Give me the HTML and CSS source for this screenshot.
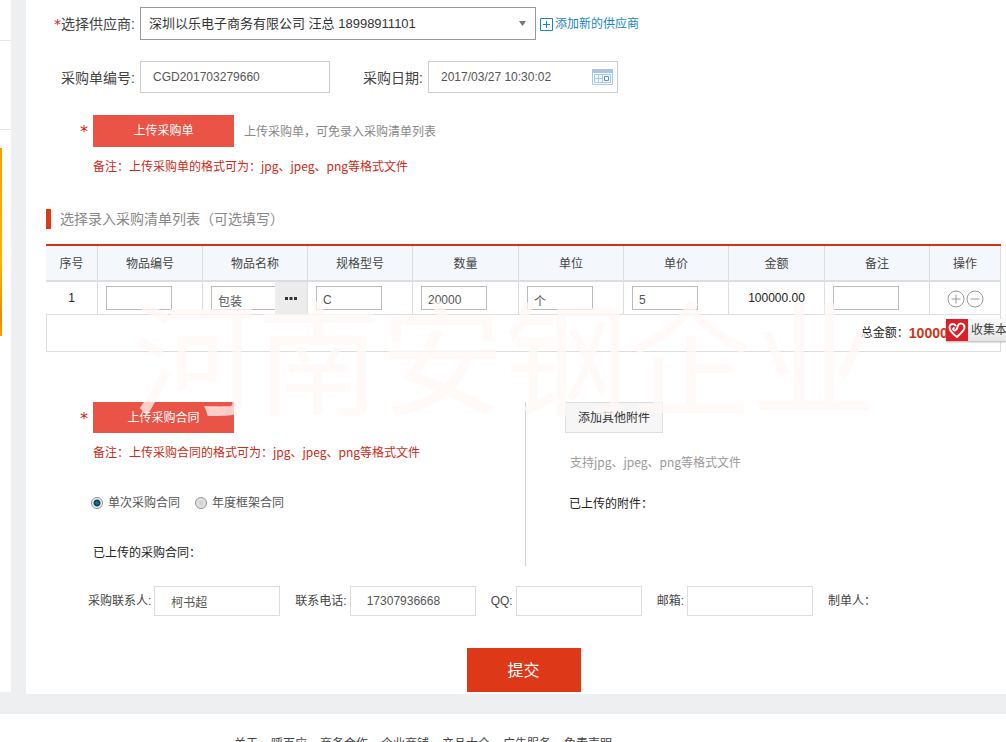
FILE: index.html
```html
<!DOCTYPE html>
<html lang="zh-CN">
<head>
<meta charset="utf-8">
<title>采购单</title>
<link rel="stylesheet" href="styles.css">
</head>
<body>
<div class="layout">
  <aside class="side">
    <div class="side-item side-first"></div>
    <div class="side-item side-second"></div>
    <div class="side-banner"></div>
  </aside>
  <main class="main">
    <form class="form">
      <div class="row row-supplier">
        <label class="label" for="supplier"><span class="req">*</span>选择供应商:</label>
        <div class="select-wrap">
          <select id="supplier" class="select"><option>深圳以乐电子商务有限公司 汪总 18998911101</option></select>
          <svg class="arrow" width="8" height="6" viewBox="0 0 8 6"><path d="M0 0h7L3.500 5z" fill="#777"/></svg>
        </div>
        <a class="add-link" href="#"><svg width="13" height="13" viewBox="0 0 13 13" fill="none" stroke="#1a86c2"><path d="M.5.5h12v12H.5zM3 6.500h7M6.500 3v7"/></svg>添加新的供应商</a>
      </div>

      <div class="row row-order">
        <label class="label" for="orderno">采购单编号:</label>
        <input id="orderno" class="field" value="CGD201703279660">
        <label class="label label-date" for="date">采购日期:</label>
        <div class="date-wrap">
          <input id="date" class="field" value="2017/03/27 10:30:02">
          <svg class="calendar" width="21" height="16" viewBox="0 0 21 16" fill="none"><path d="M.5.5h20v15H.5z" fill="#f5faff" stroke="#a9cbe8"/><path d="M0 0h21v4H0z" fill="#a9c6e4"/><path d="M2.500 5.500h16v8h-16zM2.500 9.500h9M6.500 5.500v8M10.500 5.500v8" stroke="#a9cbe8"/><path d="M12.500 7.500h4v4h-4z" fill="#fff" stroke="#5d94c6"/></svg>
        </div>
      </div>

      <div class="upload">
        <span class="req">*</span>
        <button type="button" class="btn-upload">上传采购单</button>
        <span class="tip">上传采购单，可免录入采购清单列表</span>
      </div>
      <p class="note">备注：上传采购单的格式可为：jpg、jpeg、png等格式文件</p>

      <h2 class="title">选择录入采购清单列表（可选填写）</h2>

      <table class="items">
        <colgroup><col class="c-no"><col class="c-std"><col class="c-std"><col class="c-std"><col class="c-qty"><col class="c-std"><col class="c-std"><col class="c-sum"><col class="c-std"><col class="c-op"></colgroup>
        <thead>
          <tr><th>序号</th><th>物品编号</th><th>物品名称</th><th>规格型号</th><th>数量</th><th>单位</th><th>单价</th><th>金额</th><th>备注</th><th>操作</th></tr>
        </thead>
        <tbody>
          <tr>
            <td class="center">1</td>
            <td><input class="cell" aria-label="物品编号"></td>
            <td><div class="name-cell"><input class="cell" aria-label="物品名称" value="包装"><button type="button" class="more" aria-label="选择物品"><svg width="12" height="3" viewBox="0 0 12 3"><path d="M0 0h3v3H0zM4.500 0h3v3h-3zM9 0h3v3H9z" fill="#333"/></svg></button></div></td>
            <td><input class="cell" aria-label="规格型号" value="C"></td>
            <td><input class="cell" aria-label="数量" value="20000"></td>
            <td><input class="cell" aria-label="单位" value="个"></td>
            <td><input class="cell" aria-label="单价" value="5"></td>
            <td class="center">100000.00</td>
            <td><input class="cell" aria-label="备注"></td>
            <td><div class="ops">
              <button type="button" class="op" aria-label="增加"><svg width="18" height="18" viewBox="0 0 18 18" fill="none" stroke="#999"><circle cx="9" cy="9" r="8"/><path d="M4.500 9h9M9 4.500v9"/></svg></button>
              <button type="button" class="op" aria-label="删除"><svg width="18" height="18" viewBox="0 0 18 18" fill="none" stroke="#999"><circle cx="9" cy="9" r="8"/><path d="M4.500 9h9"/></svg></button>
            </div></td>
          </tr>
        </tbody>
      </table>
      <div class="total">总金额：<strong>100000.00</strong></div>

      <div class="files">
        <section class="contract">
          <div class="upload">
            <span class="req">*</span>
            <button type="button" class="btn-upload">上传采购合同</button>
          </div>
          <p class="note">备注：上传采购合同的格式可为：jpg、jpeg、png等格式文件</p>
          <div class="radios">
            <label class="radio-label"><input class="radio" type="radio" name="kind" checked>单次采购合同</label>
            <label class="radio-label"><input class="radio" type="radio" name="kind">年度框架合同</label>
          </div>
          <p class="uploaded">已上传的采购合同：</p>
        </section>
        <section class="attach">
          <button type="button" class="btn-attach">添加其他附件</button>
          <p class="support">支持jpg、jpeg、png等格式文件</p>
          <p class="attached">已上传的附件：</p>
        </section>
      </div>

      <div class="contacts">
        <label class="contact">采购联系人:<input class="contact-input" value="柯书超"></label>
        <label class="contact">联系电话:<input class="contact-input" value="17307936668"></label>
        <label class="contact">QQ:<input class="contact-input"></label>
        <label class="contact">邮箱:<input class="contact-input"></label>
        <span class="contact">制单人：</span>
      </div>

      <button type="button" class="submit">提交</button>
    </form>
    <div class="watermark">河南安钢企业</div>
    <button type="button" class="collect">
      <svg width="22" height="22" viewBox="0 0 22 22"><path d="M0 0h22v22H0z" fill="#dc1f27"/><path d="M11 18C13.500 15 19 11.500 18.500 8C18 4 13.500 3.500 12 6.500C11 9 11.500 11 9 11.500C7 11.700 6.500 9.500 8 9M11 18C7 15 3.500 12 3.500 8.500C3.500 5 7.500 4 9.500 6.500" fill="none" stroke="#fff" stroke-width="2" stroke-linecap="round" stroke-linejoin="round"/></svg>
      <span class="collect-text">收集本</span>
    </button>
  </main>
</div>
<footer class="footer">
  <nav class="links"><a href="#">关于</a><a href="#">呼百应</a><a href="#">商务合作</a><a href="#">企业商铺</a><a href="#">产品大全</a><a href="#">广告服务</a><a href="#">免责声明</a></nav>
</footer>
</body>
</html>
```

FILE: styles.css
```css
* { box-sizing: border-box; }

body {
  margin: 0;
  height: 100vh;
  overflow: hidden;
  background: #edeff0;
  color: #444;
  font: 12px/16px "Liberation Sans", "Noto Sans CJK SC", sans-serif;
}

p, h2 { margin: 0; }
input, select, button { font: inherit; color: inherit; margin: 0; border-radius: 0; }
button { padding: 0; cursor: pointer; }
svg { display: block; flex: none; }

.layout { display: flex; gap: 15px; padding-bottom: 20px; }

.side { width: 11px; background: #fff; margin-bottom: 2px; }
.side-item { border-bottom: 1px solid #e4e4e4; }
.side-first { height: 41px; }
.side-second { height: 89px; margin-bottom: 18px; }
.side-banner { width: 2px; height: 188px; background: linear-gradient(#ff9c00, #ffb400 60%, #f08a00 90%, #ff9c00); }

.main {
  position: relative;
  flex: 1;
  min-width: 0;
  padding: 7px 5px 2px 20px;
  background: #fff;
}

.row { display: flex; align-items: center; }
.row-supplier { margin-bottom: 21px; }
.row-order { margin-bottom: 22px; }
.label { width: 94px; padding: 1px 5px 0 0; text-align: right; font-size: 14px; white-space: nowrap; }
.label-date { width: 98px; }
.req { color: #d6201c; font-family: "DejaVu Sans", sans-serif; font-size: 16px; }
.label .req { font-size: 14px; }

.select-wrap, .date-wrap { position: relative; }
.select {
  appearance: none;
  width: 396px;
  height: 33px;
  padding: 0 8px;
  border: 1px solid #999;
  background: #fff;
  color: #333;
  font-size: 13px;
}
.arrow { position: absolute; right: 9px; top: 14px; }
.add-link { display: flex; align-items: center; gap: 2px; margin-left: 4px; padding-top: 1px; color: #1a86c2; text-decoration: none; }

.field { display: block; width: 190px; height: 32px; padding: 0 12px; border: 1px solid #ccc; background: #fff; color: #555; }
.calendar { position: absolute; right: 5px; top: 8px; }

.upload { display: flex; align-items: center; padding-left: 34px; }
.upload .req { width: 13px; padding-top: 2px; }
.btn-upload { width: 141px; height: 32px; border: 0; background: #e95446; color: #fff; }
.tip { margin-left: 10px; padding-top: 2px; color: #888; }
.note { margin: 11px 0 0 47px; color: #cc2a18; font-family: "Noto Sans CJK SC", sans-serif; }

.title {
  margin: 35px 0 15px;
  padding-left: 9px;
  border-left: 5px solid #dd3918;
  color: #888;
  font-size: 14px;
  font-weight: normal;
  line-height: 20px;
}

.items { width: 100%; table-layout: fixed; border-spacing: 0; border-top: 2px solid #cf3417; }
.c-no { width: 52px; }
.c-std { width: 105px; }
.c-qty { width: 106px; }
.c-sum { width: 96px; }
.items th { height: 36px; padding: 2px 0 0; border-right: 1px solid #ddd; border-bottom: 2px solid #ddd; background: #f4f8fd; font-weight: normal; }
.items td { height: 32px; padding: 0 0 0 8px; border-right: 1px solid #ddd; }
.items td.center { padding: 0; text-align: center; color: #222; }
.cell { display: block; width: 66px; height: 24px; padding: 4px 6px 0; border: 1px solid #bbb; background: #fff; color: #555; }
.name-cell { display: flex; align-items: center; }
.name-cell .cell { flex: 1; min-width: 0; border-right: 0; }
.more { display: flex; align-items: center; justify-content: center; width: 32px; height: 32px; border: 0; background: #ececec; }
.ops { display: flex; justify-content: center; gap: 1px; padding: 2px 8px 0 0; }
.op { border: 0; background: none; }

.total {
  display: flex;
  justify-content: flex-end;
  align-items: center;
  height: 38px;
  padding-right: 25px;
  border: 1px solid #ddd;
  color: #222;
}
.total strong { color: #cf3417; font-size: 14px; }

.files { display: flex; margin-top: 50px; min-height: 164px; }
.contract { width: 480px; border-right: 1px solid #d5d5d5; }
.files .upload .btn-upload { height: 31px; }
.radios { display: flex; gap: 15px; margin: 35px 0 0 45px; }
.radio-label { display: flex; align-items: center; gap: 5px; color: #555; }
.radio {
  appearance: none;
  width: 12px;
  height: 12px;
  border: 1px solid #8f8f8f;
  border-radius: 50%;
  background: radial-gradient(circle, #ccc, #f4f4f4);
}
.radio:checked { background: radial-gradient(circle, #2c7fa8 0, #123a58 3px, #f4f4f4 4px); }
.uploaded { margin: 34px 0 0 47px; color: #222; }
.attach { padding-left: 39px; }
.btn-attach { width: 98px; height: 31px; border: 1px solid #ddd; background: #f6f6f6; color: #333; }
.support { margin: 21px 0 0 5px; color: #999; font-family: "Noto Sans CJK SC", sans-serif; }
.attached { margin: 26px 0 0 4px; color: #222; }

.contacts { display: flex; gap: 15px; margin-top: 20px; padding-left: 42px; }
.contact { display: flex; align-items: center; gap: 3px; white-space: nowrap; }
.contact-input { width: 126px; height: 30px; padding: 0 16px; border: 1px solid #ddd; background: #fff; color: #555; }

.submit { display: block; width: 114px; height: 44px; margin: 32px auto 0; padding-top: 2px; border: 0; background: #dd3918; color: #fff; font-size: 16px; }

.watermark {
  position: absolute;
  left: 106px;
  top: 301px;
  color: rgba(255, 247, 246, .75);
  font-size: 124px;
  line-height: 124px;
  white-space: nowrap;
  pointer-events: none;
}
.collect {
  position: absolute;
  right: 0;
  top: 319px;
  display: flex;
  align-items: center;
  gap: 3px;
  width: 60px;
  overflow: hidden;
  border: 0;
  background: linear-gradient(#fafafa, #e6e6e6);
  box-shadow: 0 1px 2px #aaa;
  white-space: nowrap;
}
.collect-text { flex: none; }

.footer { height: 60px; padding-top: 22px; background: #fff; }
.links { display: flex; gap: 13px; padding-left: 234px; }
.links a { color: #444; text-decoration: none; }
```
